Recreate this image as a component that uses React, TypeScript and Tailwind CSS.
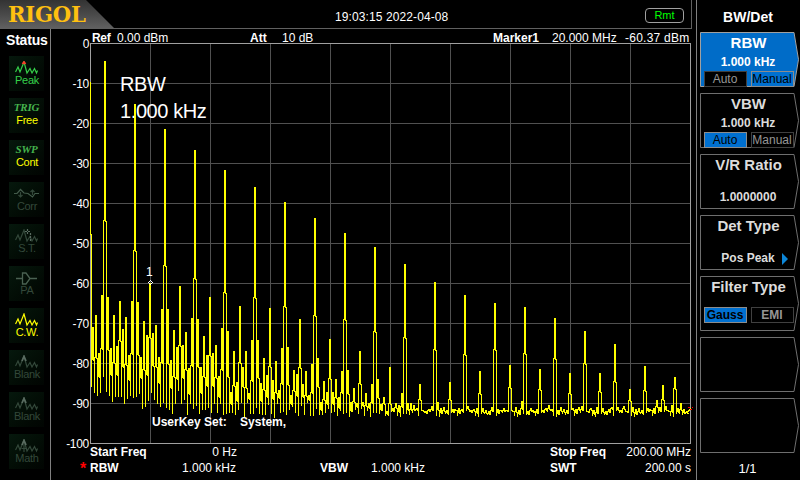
import { clsx } from "clsx";
import type { ReactNode } from "react";

// Two spectrum columns share a top value, every third column drops to the trough.
const tops = [
  327, 315, 353, 295, 61, 297, 348, 315, 346, 301,
  329, 317, 355, 301, 104, 302, 357, 321, 335, 283,
  333, 325, 357, 309, 129, 309, 360, 330, 347, 286,
  345, 332, 368, 318, 150, 319, 367, 336, 355, 297,
  353, 345, 376, 328, 170, 331, 392, 351, 382, 306,
  367, 351, 393, 340, 187, 340, 383, 358, 375, 308,
  380, 361, 390, 348, 202, 347, 395, 370, 374, 319,
  384, 371, 395, 364, 218, 358, 402, 381, 392, 339,
  392, 379, 397, 371, 233, 370, 402, 388, 403, 351,
  402, 393, 403, 384, 247, 379, 404, 397, 411, 367,
  408, 403, 405, 393, 264, 403, 403, 405, 408, 384,
  410, 411, 409, 406, 282, 402, 408, 407, 410, 382,
  409, 410, 408, 409, 295, 406, 410, 409, 408, 371,
  408, 410, 411, 407, 303, 409, 410, 408, 410, 365,
  411, 407, 410, 401, 307, 411, 408, 412, 409, 369,
  410, 408, 405, 409, 318, 410, 407, 409, 410, 373,
  408, 409, 407, 406, 331, 411, 408, 410, 407, 373,
  408, 411, 409, 407, 344, 407, 410, 406, 411, 389,
  407, 409, 408, 410, 366, 408, 410, 408, 400, 407,
  385, 406, 411, 405, 377, 408, 403, 409, 411, 409,
];

const troughs = [
  386, 392, 395, 392, 376, 391, 395, 401, 396, 396,
  396, 403, 398, 395, 397, 396, 393, 408, 406, 400,
  392, 399, 403, 406, 402, 407, 409, 413, 403, 390,
  403, 399, 414, 403, 408, 405, 413, 409, 409, 407,
  412, 403, 412, 403, 414, 413, 412, 412, 414, 409,
  402, 416, 402, 413, 413, 407, 413, 414, 414, 404,
  413, 417, 403, 412, 411, 414, 409, 406, 412, 415,
  405, 414, 402, 415, 415, 408, 414, 414, 412, 408,
  412, 411, 415, 410, 413, 412, 416, 411, 409, 413,
  408, 415, 410, 416, 412, 412, 413, 408, 415, 415,
];

// Level at which a tall carrier widens into its skirt.
const skirts: Record<number, number> = {
  4: 220, 14: 250, 24: 265, 34: 278, 44: 292, 54: 297, 64: 306, 74: 315,
  84: 319, 94: 331, 104: 337, 114: 349, 124: 354, 134: 349, 144: 353,
  154: 358, 164: 363, 174: 381, 184: 390, 194: 388,
  9: 340, 19: 337, 29: 345, 39: 355, 49: 362, 59: 366, 69: 367, 79: 378,
  89: 383, 99: 403, 109: 399, 119: 399, 129: 393, 139: 387, 149: 389,
  159: 393, 169: 391, 179: 400,
};

const noise = [413, 410, 412, 415, 410, 413, 411, 409, 416, 412, 414, 410, 415];

const buildTrace = () => {
  let d = "M.5 38.5V191H1.5";
  tops.forEach((top, k) => {
    const low = (troughs[k] ?? noise[(k * 5) % noise.length]) - 42.5;
    const mid = (skirts[k] ?? Math.round(top * 0.45 + (low + 42.5) * 0.55)) - 42.5;
    const x = 1.5 + k * 3;
    if (x > 598) return;
    d += `V${low}V${mid}H${x + 1}V${top - 42.5}H${x + 2}V${mid + 1}H${x + 3}`;
  });
  return d;
};

const trace = buildTrace();

const WAVE = "M.5 11L3 6L5 11L9 1L12 12L15 7.5L17 12L19.5 7.5L21.5 12L22.5 9.5";

interface StatusItem {
  label: string;
  tone: "green" | "yellow" | "dim";
  icon?: ReactNode;
  word?: string;
}

const Wave = ({ children, dim }: { children?: ReactNode; dim?: boolean }) => (
  <svg width="24" height="14" viewBox="0 0 24 14" fill="none" stroke="currentColor" strokeWidth="1.2">
    <path d={WAVE} />
    {dim && <path d="M7 6L9 1.5L11 6" stroke="#596b60" strokeWidth="1.8" />}
    {children}
  </svg>
);

const statusItems: StatusItem[] = [
  { label: "Peak", tone: "green", icon: <Wave><path d="M7.5 3L9 1L10.5 3" stroke="#ff3c28" strokeWidth="1.8" /></Wave> },
  { label: "Free", tone: "yellow", word: "TRIG" },
  { label: "Cont", tone: "yellow", word: "SWP" },
  {
    label: "Corr",
    tone: "dim",
    icon: (
      <svg width="26" height="14" viewBox="0 0 26 14" fill="none" stroke="currentColor" strokeWidth="1.2">
        <path d="M0 6.5H3L6.5 2.5L10 6L14 6.5L18.5 10L21 6.5H25" stroke="#435b4b" />
        <path d="M6.5 5V10M4.5 8L6.5 10L8.5 8M18.5 8V3M16.5 5L18.5 3L20.5 5" />
      </svg>
    ),
  },
  { label: "S.T.", tone: "dim", icon: <Wave><path d="M10 2.5h5M12.5 0v5M15.5 4v9" stroke="#596b60" strokeDasharray="2 1" /></Wave> },
  {
    label: "PA",
    tone: "dim",
    icon: (
      <svg width="24" height="13" viewBox="0 0 24 13" fill="none" stroke="#4a6152" strokeWidth="1.3">
        <path d="M1 6.5H8M15 6.5H22M7.5 1V12H11L15 6.5L11 1Z" />
      </svg>
    ),
  },
  { label: "C.W.", tone: "yellow", icon: <Wave /> },
  { label: "Blank", tone: "dim", icon: <Wave dim /> },
  { label: "Blank", tone: "dim", icon: <Wave dim /> },
  { label: "Math", tone: "dim", icon: <Wave dim><path d="M9 5v8M6.5 9.5h5" /></Wave> },
];

const StatusTile = ({ label, tone, icon, word }: StatusItem) => (
  <div
    className={clsx(
      "flex h-[35px] w-[35px] flex-col items-center bg-linear-to-br from-[#06180d] to-[#010502]",
      word ? "pt-[3px]" : "pt-[6px]",
      tone === "green" && "text-[#35d04a]",
      tone === "yellow" && "text-[#ffff00]",
      tone === "dim" && "text-[#33483a]"
    )}
  >
    {word ? (
      <span className="font-['Liberation_Serif',serif] text-[11px] font-bold italic leading-[13px] tracking-[-0.2px] text-[#45b34d]">
        {word}
      </span>
    ) : (
      <span className="flex h-[12px] items-center pl-px">{icon}</span>
    )}
    <span className="pl-px text-[11px] leading-[12px] tracking-[-0.3px]">{label}</span>
  </div>
);

interface SoftKeyProps {
  title?: string;
  value?: string;
  options?: [string, string];
  selected?: number;
  active?: boolean;
  submenu?: boolean;
}

const SoftKey = ({ title, value, options, selected, active, submenu }: SoftKeyProps) => (
  <div className={clsx("relative h-[56px] w-[99px]", active ? "text-white" : "text-[#dcdcdc]")}>
    <svg className="absolute inset-0" width="99" height="56" viewBox="0 0 99 56">
      <path
        d="M.5 .5H94L98.5 27.5L94 54.5H.5Z"
        fill={active ? "#006cc8" : "#000"}
        stroke={active ? "#a0a0a0" : "#6e6e6e"}
      />
    </svg>
    <div className="relative flex h-full w-[97px] flex-col items-center pt-[2px] font-bold">
      {title && <span className="text-[15px] leading-[18px]">{title}</span>}
      {value && (
        <span className={clsx("pr-px text-[12px] leading-[14px]", options ? "mt-[3px]" : "mt-[16px]")}>{value}</span>
      )}
      {submenu && (
        <span className="absolute right-[9px] bottom-[6px] border-y-[6px] border-l-[6px] border-y-transparent border-l-[#0c86d8]" />
      )}
      {options && (
        <div className={clsx("flex gap-[4px]", value ? "mt-[2px]" : "mt-[11px]")}>
          {options.map((option, i) => (
            <span
              key={option}
              className={clsx(
                "flex h-[16px] w-[43px] items-center justify-center border text-[12px] leading-none",
                value && "font-normal",
                i === selected ? "border-[#8c8c8c] bg-[#0070d0] text-black" : "border-[#404040] bg-black text-[#969696]"
              )}
            >
              {option}
            </span>
          ))}
        </div>
      )}
    </div>
  </div>
);

const Header = () => (
  <header className="flex h-[29px] w-[692px] border-r border-b border-[#606060]">
    <div className="h-[28px] w-[114px] bg-linear-to-b from-[#333] to-[#606060] pl-[8px] [clip-path:polygon(0_0,86px_0,114px_100%,0_100%)]">
      <span className="block w-[90px] origin-left scale-x-[0.92] font-['DejaVu_Serif',serif] text-[23px] font-bold leading-[28px] tracking-[-0.3px] text-[#ffc010]">
        RIGOL
      </span>
    </div>
    <span className="ml-[221px] w-[310px] pt-[9px] text-[12px] leading-[16px] tracking-[0.1px]">19:03:15 2022-04-08</span>
    <span className="mt-[8px] flex h-[15px] w-[39px] items-center justify-center rounded-[4px] border border-[#a0a0a0] text-[11px] text-[#00ff00]">
      Rmt
    </span>
  </header>
);

const Plot = () => (
  <div className="relative h-[401px] w-[607px]">
    <svg width="607" height="401" viewBox="0 0 607 401" fill="none" shapeRendering="crispEdges">
      <g stroke="#505050">
        {[1, 2, 3, 4, 5, 6, 7, 8, 9].map((i) => (
          <path key={i} d={`M${i * 60 + 0.5} 0V400M0 ${i * 40 + 0.5}H600`} />
        ))}
      </g>
      <path d="M.5 .5H600.5V400.5H.5Z" stroke="#a0a0a0" />
      <path d={trace} stroke="#ffff00" />
      <path d="M597.5 369.5L600.5 365.5" stroke="#ffff00" />
      <path d="M598 364.5H600M600 366.5H602M602 364.5H603" stroke="#ff0000" />
      <path d="M60.5 237.5L62.5 239.5L60.5 241.5L58.5 239.5Z" stroke="#fff" />
    </svg>
    <span className="absolute top-[221px] left-[56px] text-[12px] leading-[16px]">1</span>
    <div className="absolute top-[28px] left-[30px] text-[20px] leading-[27px]">
      <p className="tracking-[-0.4px]">RBW</p>
      <p className="tracking-[-0.4px]">1.000 kHz</p>
    </div>
    <p className="absolute top-[371px] left-[62px] text-[12px] font-bold leading-[16px] whitespace-pre">
      UserKey Set:{"    "}System,
    </p>
  </div>
);

const App = () => (
  <div className="flex h-[480px] w-[800px] overflow-hidden bg-black font-['Liberation_Sans',Arial,sans-serif] text-white">
    <div className="w-[696px]">
      <Header />
      <div className="flex h-[451px]">
        <aside className="flex w-[51px] flex-col border-r border-[#808080] pl-[9px]">
          <h2 className="-ml-[3px] h-[27px] pt-[3px] text-[14px] font-bold leading-[17px] tracking-[-0.2px]">Status</h2>
          <div className="flex flex-col gap-[7px]">
            {statusItems.map((item, i) => (
              <StatusTile key={i} {...item} />
            ))}
          </div>
        </aside>

        <div className="-mt-[5px] w-[38px] text-right text-[12px] tracking-[-0.3px]">
          {[0, -10, -20, -30, -40, -50, -60, -70, -80, -90, -100].map((level) => (
            <div key={level} className="flex h-[40px] items-center justify-end">{level}</div>
          ))}
        </div>

        <div className="ml-px w-[606px]">
          <div className="flex h-[14px] w-[600px] pl-[2px] pt-px text-[12px] leading-[16px] whitespace-nowrap">
            <b className="w-[25px] tracking-[-0.3px]">Ref</b>
            <span className="w-[133px]">0.00 dBm</span>
            <b className="w-[32px]">Att</b>
            <span className="w-[211px]">10 dB</span>
            <b className="w-[59px]">Marker1</b>
            <span className="w-[73px]">20.000 MHz</span>
            <span className="tracking-[0.25px]">-60.37 dBm</span>
          </div>
          <Plot />
          <div className="flex w-[601px] text-[12px] leading-[16px]">
            <b className="w-[60px] whitespace-nowrap">Start Freq</b>
            <span className="w-[87px] text-right">0 Hz</span>
            <b className="ml-[313px]">Stop Freq</b>
            <span className="ml-auto">200.00 MHz</span>
          </div>
          <div className="-ml-[10px] flex w-[611px] text-[12px] leading-[16px]">
            <b className="w-[10px] text-[16px] leading-[18px] text-[#ff0000]">*</b>
            <b className="w-[92px]">RBW</b>
            <span className="w-[138px]">1.000 kHz</span>
            <b className="w-[51px]">VBW</b>
            <span className="w-[179px]">1.000 kHz</span>
            <b>SWT</b>
            <span className="ml-auto">200.00 s</span>
          </div>
        </div>
      </div>
    </div>

    <nav className="flex w-[104px] flex-col border-l border-[#808080] pl-[3px]">
      <h1 className="h-[32px] w-[96px] pt-[8px] text-center text-[14px] font-bold leading-[18px]">BW/Det</h1>
      <div className="flex flex-col gap-[5px]">
        <SoftKey title="RBW" value="1.000 kHz" options={["Auto", "Manual"]} selected={1} active />
        <SoftKey title="VBW" value="1.000 kHz" options={["Auto", "Manual"]} selected={0} />
        <SoftKey title="V/R Ratio" value="1.0000000" />
        <SoftKey title="Det Type" value="Pos Peak" submenu />
        <SoftKey title="Filter Type" options={["Gauss", "EMI"]} selected={0} />
        <SoftKey />
        <SoftKey />
      </div>
      <span className="mt-[7px] w-[95px] text-center text-[13px] leading-[16px]">1/1</span>
    </nav>
  </div>
);

export default App;
